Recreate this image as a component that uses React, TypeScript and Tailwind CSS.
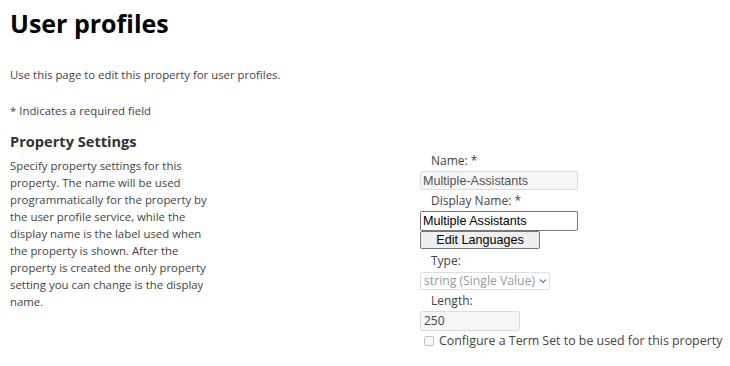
const sans = "font-['Open_Sans','Noto_Sans',sans-serif]";
const arial = "font-['Liberation_Sans',Arial,sans-serif]";

function FieldLabel({ children, className = "" }: { children: React.ReactNode; className?: string }) {
  return (
    <div className={`h-[17px] pl-[11px] text-[12px] leading-[17px] text-[#444] ${className}`}>{children}</div>
  );
}

export default function App() {
  return (
    <div className={`${sans} min-h-screen bg-white pl-[10px] text-[#444]`}>
      <h1 className="pt-[8px] text-[25px] font-bold leading-[31px] text-black">User profiles</h1>
      <p className="mt-[27px] text-[11.4px] leading-[17px]">Use this page to edit this property for user profiles.</p>
      <p className="mt-[19px] text-[11.4px] leading-[17px]">* Indicates a required field</p>
      <h2 className="mt-[12px] text-[14.6px] font-bold leading-[20px] text-[#333]">Property Settings</h2>

      <div className="flex">
        <div className="w-[410px] shrink-0">
          <p className="mt-[6px] w-[205px] text-[11.4px] leading-[17px]">
            Specify property settings for this property. The name will be used programmatically for the
            property by the user profile service, while the display name is the label used when the property is
            shown. After the property is created the only property setting you can change is the display name.
          </p>
        </div>

        <div className="mt-[1px] flex flex-col">
          <FieldLabel>Name: *</FieldLabel>
          <input
            disabled
            value="Multiple-Assistants"
            readOnly
            className={`${arial} mt-[2px] h-[19px] w-[158px] rounded-[2px] border border-[#dcdcdc] bg-[#f6f6f6] px-[2px] text-[12.6px] text-[#545454]`}
          />
          <FieldLabel className="mt-[2px]">Display Name: *</FieldLabel>
          <input
            value="Multiple Assistants"
            readOnly
            className={`${arial} mt-[2px] h-[20px] w-[158px] rounded-[2px] border border-[#767676] bg-white px-[2px] text-[12.6px] text-black outline-none`}
          />
          <button
            className={`${arial} h-[18px] w-[120px] rounded-[2px] border border-[#767676] bg-[#efefef] text-[12.6px] leading-[16px] text-black`}
          >
            Edit Languages
          </button>
          <FieldLabel className="mt-[3px]">Type:</FieldLabel>
          <div className="mt-[3px] flex h-[18px] w-[130px] items-center gap-[4px] whitespace-nowrap rounded-[2px] border border-[#d8e0e8] bg-white pl-[3px] text-[12.2px] leading-[16px] text-[#9a9a9a]">
            <span>string (Single Value)</span>
            <svg width="8" height="6" viewBox="0 0 8 6" fill="none" stroke="#7a7a7a" strokeWidth="1.2">
              <path d="M1 1.5 L4 4.5 L7 1.5" />
            </svg>
          </div>
          <FieldLabel className="mt-[2px]">Length:</FieldLabel>
          <div className="mt-[2px] flex h-[20px] w-[100px] items-center rounded-[2px] border border-[#dcdcdc] bg-[#f6f6f6] px-[3px] text-[12px] text-[#444]">
            250
          </div>
          <div className="mt-[1px] flex h-[17px] items-center whitespace-nowrap pl-[4px] text-[12.4px] leading-[17px] text-[#444]">
            <span className="mr-[5px] inline-block h-[10px] w-[10px] rounded-[2px] border border-[#c4c4c4] bg-[#f8f8f8]" />
            Configure a Term Set to be used for this property
          </div>
        </div>
      </div>
    </div>
  );
}
